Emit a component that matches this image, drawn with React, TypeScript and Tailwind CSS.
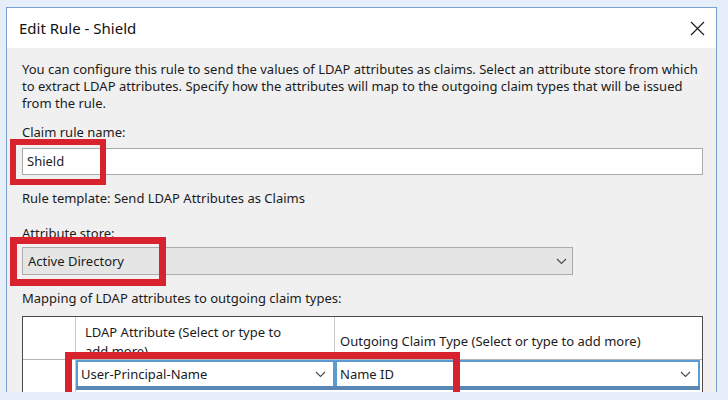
import React from "react";

const font = { fontFamily: '"Segoe UI", "Noto Sans", "Open Sans", sans-serif' };

function Chevron({ className = "" }: { className?: string }) {
  return (
    <svg width="11" height="7" viewBox="0 0 11 7" className={className}>
      <path d="M1 1 L5.5 5.5 L10 1" fill="none" stroke="#4a4a4a" strokeWidth="1.1" />
    </svg>
  );
}

function CloseIcon() {
  return (
    <svg width="15" height="15" viewBox="0 0 15 15">
      <path d="M1 1 L14 14 M14 1 L1 14" fill="none" stroke="#1e1e1e" strokeWidth="1.2" />
    </svg>
  );
}

export default function App() {
  return (
    <div
      className="w-[728px] h-[400px] bg-[#e6eefa] pl-[6px] pt-[7px] overflow-hidden text-[#1b1b1b]"
      style={font}
    >
      <div className="relative w-[711px] h-[385px] border-x border-t border-[#7b9fcf] bg-[#f0f0f0] overflow-hidden flex flex-col">
        {/* title bar */}
        <div className="h-[40px] shrink-0 bg-white flex items-center justify-between pl-[12px] pr-[11px]">
          <span className="text-[15px] text-[#111]">Edit Rule - Shield</span>
          <CloseIcon />
        </div>

        {/* dialog body */}
        <div className="flex flex-col pl-[15px] pr-[13px] pt-[13px] text-[13px] leading-[17px]">
          <p className="whitespace-nowrap">
            You can configure this rule to send the values of LDAP attributes as claims. Select an attribute store from which
            <br />
            to extract LDAP attributes. Specify how the attributes will map to the outgoing claim types that will be issued
            <br />
            from the rule.
          </p>

          <div className="mt-[12px]">Claim rule name:</div>
          <div className="mt-[7px] h-[27px] bg-white border border-[#a9a9a9] flex items-center pl-[4px]">
            Shield
          </div>

          <div className="mt-[15px]">Rule template: Send LDAP Attributes as Claims</div>

          <div className="mt-[18px]">Attribute store:</div>
          <div className="mt-[5px] w-[551px] h-[28px] bg-[#e5e5e5] border border-[#acacac] flex items-center justify-between pl-[5px] pr-[5px]">
            <span>Active Directory</span>
            <Chevron />
          </div>

          <div className="mt-[15px]">Mapping of LDAP attributes to outgoing claim types:</div>

          {/* mapping grid */}
          <div className="mt-[9px] w-[681px] bg-white border border-[#4a4a4a]">
            <div className="grid grid-cols-[53px_259px_1fr] h-[43px] border-b border-[#b5b5b5]">
              <div className="border-r border-[#c8c8c8]" />
              <div className="border-r border-[#c8c8c8] pl-[9px] pt-[6px] h-[43px] overflow-hidden leading-[19px]">
                LDAP Attribute (Select or type to
                <br />
                add more)
              </div>
              <div className="flex items-center pl-[5px] pt-[5px]">Outgoing Claim Type (Select or type to add more)</div>
            </div>
            <div className="grid grid-cols-[53px_259px_1fr] h-[40px]">
              <div className="border-r border-[#c8c8c8]" />
              <div className="flex flex-col">
                <div className="h-[26px] border-x-2 border-t-2 border-[#5b9bd2] flex items-center justify-between pl-[3px] pr-[7px]">
                  <span>User-Principal-Name</span>
                  <Chevron />
                </div>
                <div className="h-[4px] bg-[#5a87b3]" />
              </div>
              <div className="flex flex-col pr-[2px]">
                <div className="h-[26px] border-x-2 border-t-2 border-[#5b9bd2] flex items-center justify-between pl-[3px] pr-[7px]">
                  <span>Name ID</span>
                  <Chevron />
                </div>
                <div className="h-[4px] bg-[#5a87b3]" />
              </div>
            </div>
          </div>
        </div>

        {/* highlight frames */}
        <div className="absolute left-[3px] top-[131px] w-[96px] h-[46px] border-[6px] border-[#d8222d]" />
        <div className="absolute left-[3px] top-[229px] w-[156px] h-[49px] border-[7px] border-[#d8222d]" />
        <div className="absolute left-[58px] top-[344px] w-[395px] h-[70px] border-[7px] border-[#d8222d]" />
      </div>
    </div>
  );
}
